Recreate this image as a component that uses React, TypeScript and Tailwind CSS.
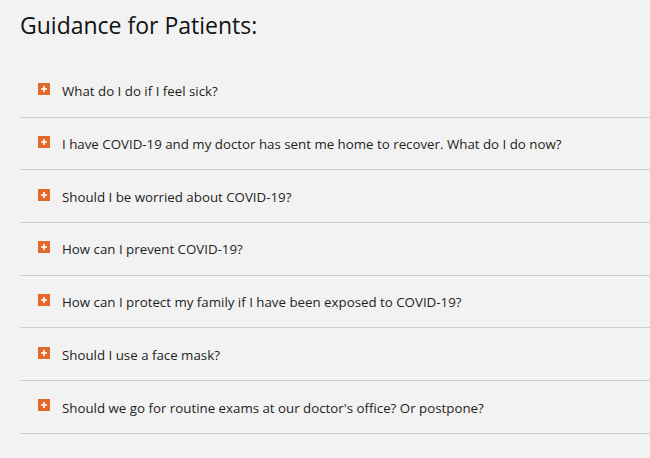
import React from 'react';

const questions = [
  'What do I do if I feel sick?',
  'I have COVID-19 and my doctor has sent me home to recover. What do I do now?',
  'Should I be worried about COVID-19?',
  'How can I prevent COVID-19?',
  'How can I protect my family if I have been exposed to COVID-19?',
  'Should I use a face mask?',
  "Should we go for routine exams at our doctor's office? Or postpone?",
];

const PlusBox: React.FC = () => (
  <span className="w-3 h-3 bg-[#e2692b] flex items-center justify-center shrink-0 -mt-[3px]">
    <svg width="8" height="8" viewBox="0 0 8 8">
      <path d="M4 1v6M1 4h6" stroke="#fff" strokeWidth="1.6" />
    </svg>
  </span>
);

const App: React.FC = () => {
  return (
    <div className="min-h-[458px] w-full bg-[#f2f2f2] font-['Open_Sans',sans-serif] text-[#1a1a1a] overflow-hidden">
      <h1 className="pl-5 pt-[8px] text-[23px] leading-[35px] font-normal text-[#111]">Guidance for Patients:</h1>
      <div className="ml-5 mt-[22px]">
        {questions.map((q) => (
          <div
            key={q}
            className="h-[52.7px] flex items-center gap-3 pl-[18px] border-b border-[#cfcfcf] cursor-pointer"
          >
            <PlusBox />
            <span className="text-[13.3px] text-[#1e1e1e] pt-[3px]">{q}</span>
          </div>
        ))}
      </div>
    </div>
  );
};

export default App;
